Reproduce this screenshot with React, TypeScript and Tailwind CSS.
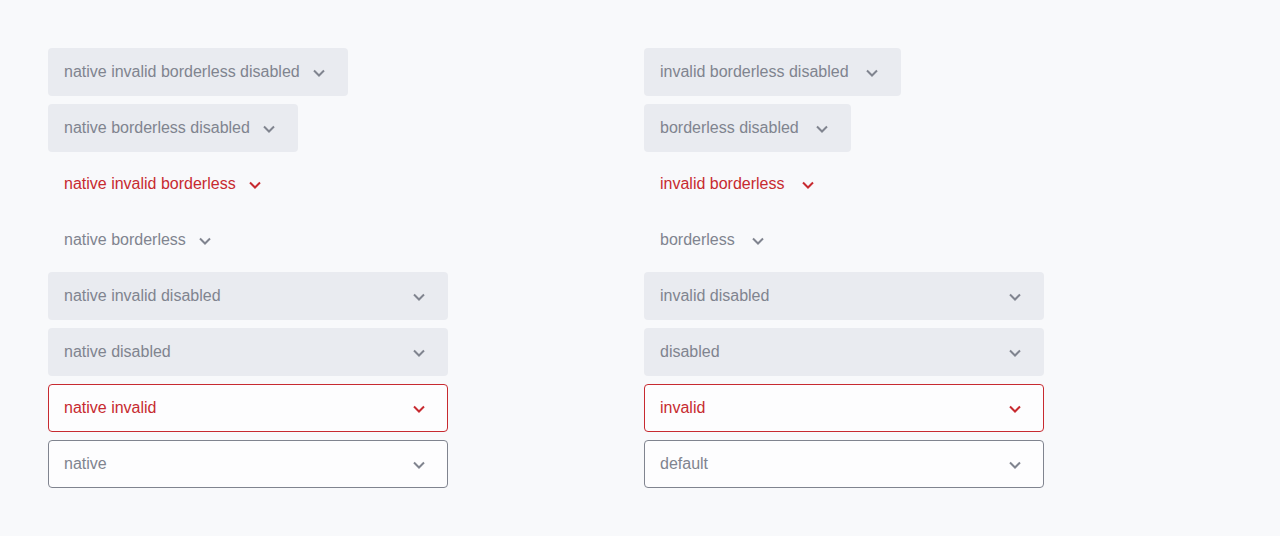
type Variant = {
  label: string;
  invalid?: boolean;
  disabled?: boolean;
  borderless?: boolean;
};

const left: Variant[] = [
  { label: "native invalid borderless disabled", invalid: true, borderless: true, disabled: true },
  { label: "native borderless disabled", borderless: true, disabled: true },
  { label: "native invalid borderless", invalid: true, borderless: true },
  { label: "native borderless", borderless: true },
  { label: "native invalid disabled", invalid: true, disabled: true },
  { label: "native disabled", disabled: true },
  { label: "native invalid", invalid: true },
  { label: "native" },
];

const right: Variant[] = [
  { label: "invalid borderless disabled", invalid: true, borderless: true, disabled: true },
  { label: "borderless disabled", borderless: true, disabled: true },
  { label: "invalid borderless", invalid: true, borderless: true },
  { label: "borderless", borderless: true },
  { label: "invalid disabled", invalid: true, disabled: true },
  { label: "disabled", disabled: true },
  { label: "invalid", invalid: true },
  { label: "default" },
];

const Chevron = ({ className }: { className: string }) => (
  <svg width="12" height="8" viewBox="0 0 12 8" fill="none" className={className}>
    <path d="M1 1.5 L6 6.5 L11 1.5" stroke="currentColor" strokeWidth="2" />
  </svg>
);

const Select = ({ v, native }: { v: Variant; native: boolean }) => {
  const red = v.invalid && !v.disabled;
  let box = "";
  if (v.disabled) box = "bg-[#e9ebf0] border border-transparent";
  else if (v.borderless) box = "border border-transparent";
  else if (v.invalid) box = "bg-[#fdfdfe] border border-[#c72a30]";
  else box = "bg-[#fdfdfe] border border-[#80848f]";

  return (
    <div
      className={`flex items-center h-12 rounded pl-[15px] pr-[22px] ${native ? "gap-[13px]" : "gap-[17px]"} ${box} ${
        v.borderless ? "w-fit" : "w-[400px] justify-between"
      }`}
    >
      <span className={`text-base ${red ? "text-[#c72a30]" : "text-[#80848f]"}`}>{v.label}</span>
      <Chevron className={`mt-px ${red ? "text-[#c72a30]" : "text-[#80848f]"}`} />
    </div>
  );
};

export default function App() {
  return (
    <div
      className="min-h-[536px] bg-[#f8f9fb] p-12 grid grid-cols-2 gap-x-2 items-start"
      style={{ fontFamily: '"Liberation Sans", Arial, sans-serif' }}
    >
      {[left, right].map((col, i) => (
        <div key={i} className="flex flex-col gap-2">
          {col.map((v) => (
            <Select key={v.label} v={v} native={i === 0} />
          ))}
        </div>
      ))}
    </div>
  );
}
